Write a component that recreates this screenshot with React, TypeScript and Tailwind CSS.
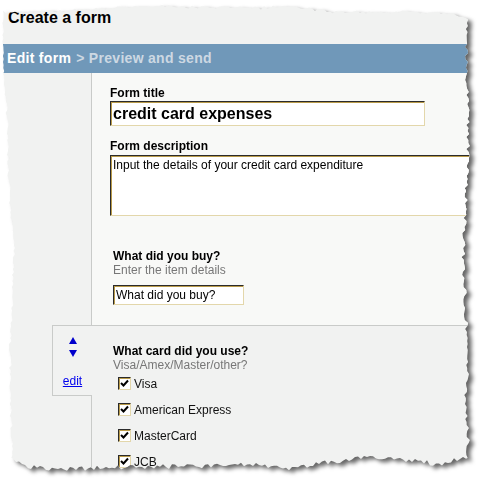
const font = "font-['Liberation_Sans',Arial,sans-serif]";

const fieldBorder =
  "border border-t-[#2b2b2b] border-l-[#2b2b2b] border-b-[#e3d7ab] border-r-[#e3d7ab] shadow-[inset_1px_1px_0_#b99b4a] bg-white";

// little seeded random so the torn edge is the same every render
function seeded(seed: number) {
  let s = seed;
  return () => {
    s = (s * 16807) % 2147483647;
    return (s - 1) / 2147483646;
  };
}

function lerp(points: [number, number][], t: number) {
  for (let i = 0; i < points.length - 1; i++) {
    const [a, av] = points[i];
    const [b, bv] = points[i + 1];
    if ((t >= a && t <= b) || (t <= a && t >= b)) {
      const k = b === a ? 0 : (t - a) / (b - a);
      return av + (bv - av) * k;
    }
  }
  return points[points.length - 1][1];
}

function tornClip() {
  const r = seeded(91);
  const top: [number, number][] = [[0, 12], [60, 11], [100, 8], [150, 6], [200, 7], [260, 8], [285, 5], [330, 12], [380, 12], [420, 12], [450, 13], [468, 20]];
  const right: [number, number][] = [[20, 468], [60, 466], [100, 468], [150, 468], [200, 466], [250, 463], [300, 465], [350, 468], [400, 466], [440, 468], [458, 466]];
  const bottom: [number, number][] = [[466, 458], [440, 464], [400, 460], [370, 457], [330, 462], [290, 468], [250, 465], [200, 466], [150, 467], [100, 468], [50, 469], [25, 466], [12, 458]];
  const left: [number, number][] = [[458, 12], [400, 11], [350, 10], [300, 13], [250, 14], [200, 10], [150, 8], [100, 6], [75, 4], [40, 3], [12, 3]];
  const pts: string[] = [];
  for (let x = 3; x <= 468; x += 3) pts.push(`${x}px ${(lerp(top, x) + (r() - 0.5) * 3).toFixed(1)}px`);
  for (let y = 20; y <= 458; y += 3) pts.push(`${(lerp(right, y) + (r() - 0.5) * 4).toFixed(1)}px ${y}px`);
  for (let x = 466; x >= 12; x -= 3) pts.push(`${x}px ${(lerp(bottom, x) + (r() - 0.5) * 5).toFixed(1)}px`);
  for (let y = 458; y >= 12; y -= 3) {
    const jitter = y < 80 ? 1.5 : 3;
    pts.push(`${(lerp(left, y) + (r() - 0.5) * jitter).toFixed(1)}px ${y}px`);
  }
  return `polygon(${pts.join(", ")})`;
}

function Check({ label }: { label: string }) {
  return (
    <div className="flex h-[26px] items-start">
      <span className={`${fieldBorder} flex h-[13px] w-[13px] items-center justify-center`}>
        <svg width="9" height="9" viewBox="0 0 9 9">
          <path d="M1 4 L3.5 6.5 L8 1.5" stroke="#000" strokeWidth="2" fill="none" />
        </svg>
      </span>
      <span className="ml-[3px] text-[12px] leading-[14px] text-[#111]">{label}</span>
    </div>
  );
}

export default function App() {
  const clip = tornClip();
  return (
    <div className={`w-[486px] h-[488px] overflow-hidden bg-white ${font}`}>
      <div className="[filter:drop-shadow(4px_3px_2px_rgba(0,0,0,0.6))]">
        <div style={{ clipPath: clip }} className="h-[488px] bg-[#f1f2f1] text-black">
          <h1 className="h-[44px] pl-[8px] pt-[9px] text-[16px] font-bold leading-[18px]">Create a form</h1>

          <div className="flex h-[29px] items-center bg-[#7098b9] pl-[7px] text-[14px] font-bold tracking-[0.3px]">
            <span className="text-white">Edit form</span>
            <span className="ml-[5px] text-[#cdd8e3]">&gt; Preview and send</span>
          </div>

          <div className="flex h-[252px]">
            <div className="w-[92px] shrink-0 border-r border-[#c9cbc9]" />
            <div className="min-w-0 flex-1 bg-[#f8f9f7] pl-[18px] pt-[13px]">
              <div className="text-[12px] font-bold leading-[14px]">Form title</div>
              <input
                readOnly
                value="credit card expenses"
                className={`${fieldBorder} mt-[1px] block h-[25px] w-[315px] px-[2px] text-[16px] font-bold outline-none`}
              />
              <div className="mt-[13px] text-[12px] font-bold leading-[14px]">Form description</div>
              <textarea
                readOnly
                value="Input the details of your credit card expenditure"
                className={`${fieldBorder} mt-[2px] block h-[61px] w-[380px] resize-none px-[2px] pt-[2px] text-[12px] leading-[14px] outline-none`}
              />
              <div className="pl-[3px] pt-[33px]">
                <div className="text-[12px] font-bold leading-[14px]">What did you buy?</div>
                <div className="text-[12px] leading-[14px] text-[#777]">Enter the item details</div>
                <input
                  readOnly
                  value="What did you buy?"
                  className={`${fieldBorder} mt-[8px] block h-[20px] w-[131px] px-[2px] text-[12px] outline-none`}
                />
              </div>
            </div>
          </div>

          <div className="flex">
            <div className="w-[92px] shrink-0">
              <div className="ml-[52px] flex h-[71px] flex-col items-center border-y border-l border-[#c9cbc9] pt-[11px]">
                <svg width="8" height="7" viewBox="0 0 8 7">
                  <path d="M4 0 L8 7 L0 7 Z" fill="#0000cc" />
                </svg>
                <svg width="8" height="7" viewBox="0 0 8 7" className="mt-[6px]">
                  <path d="M0 0 L8 0 L4 7 Z" fill="#0000cc" />
                </svg>
                <a href="#" className="mt-[17px] text-[12px] leading-[14px] text-[#0000ee] underline">
                  edit
                </a>
              </div>
              <div className="h-[80px] border-r border-[#c9cbc9]" />
            </div>
            <div className="min-w-0 flex-1 border-t border-[#c9cbc9] pl-[21px] pt-[18px]">
              <div className="text-[12px] font-bold leading-[14px]">What card did you use?</div>
              <div className="text-[12px] leading-[14px] text-[#777]">Visa/Amex/Master/other?</div>
              <div className="ml-[5px] mt-[5px]">
                <Check label="Visa" />
                <Check label="American Express" />
                <Check label="MasterCard" />
                <Check label="JCB" />
              </div>
            </div>
          </div>
        </div>
      </div>
    </div>
  );
}
